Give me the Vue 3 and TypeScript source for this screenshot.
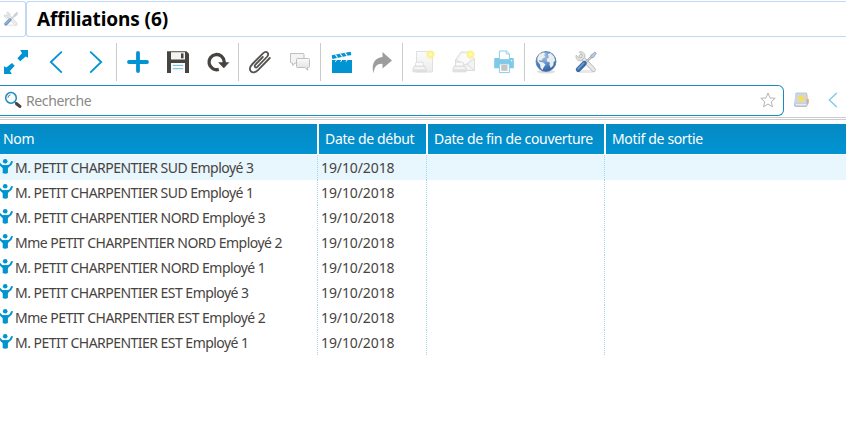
<script setup lang="ts">
interface Affiliation {
  name: string
  start: string
}

const columns: string[] = ['Nom', 'Date de début', 'Date de fin de couverture', 'Motif de sortie']

const rows: Affiliation[] = [
  'M. PETIT CHARPENTIER SUD Employé 3',
  'M. PETIT CHARPENTIER SUD Employé 1',
  'M. PETIT CHARPENTIER NORD Employé 3',
  'Mme PETIT CHARPENTIER NORD Employé 2',
  'M. PETIT CHARPENTIER NORD Employé 1',
  'M. PETIT CHARPENTIER EST Employé 3',
  'Mme PETIT CHARPENTIER EST Employé 2',
  'M. PETIT CHARPENTIER EST Employé 1',
].map((name) => ({ name, start: '19/10/2018' }))

const groups: string[][] = [
  ['switch', 'previous', 'next'],
  ['new', 'save', 'reload'],
  ['attachment', 'note'],
  ['action', 'relate'],
  ['report', 'email', 'print'],
  ['web', 'tools'],
]
</script>

<template>
  <div class="screen">
    <svg class="defs" width="0" height="0">
      <defs>
        <linearGradient id="paper" x1="0" y1="0" x2="0" y2="1">
          <stop offset="0" stop-color="#fafafa" />
          <stop offset="1" stop-color="#dedede" />
        </linearGradient>
        <linearGradient id="sheet" x1="0" y1="0" x2="0" y2="1">
          <stop offset="0" stop-color="#fbfbfb" />
          <stop offset="1" stop-color="#ececec" />
        </linearGradient>
        <radialGradient id="glow">
          <stop offset="0" stop-color="#fffef0" />
          <stop offset="0.3" stop-color="#fdf69a" />
          <stop offset="0.65" stop-color="#fbf07c" stop-opacity="0.85" />
          <stop offset="1" stop-color="#fdf8b0" stop-opacity="0" />
        </radialGradient>
        <radialGradient id="sea" cx="0.4" cy="0.25" r="0.8">
          <stop offset="0" stop-color="#a9c5e8" />
          <stop offset="0.6" stop-color="#4d82c2" />
          <stop offset="1" stop-color="#2b5a9c" />
        </radialGradient>
        <symbol id="tools" viewBox="0 0 24 24">
          <ellipse cx="12" cy="21.5" rx="10" ry="1.6" fill="#e8e8e8" />
          <path d="M7 6.5 19.5 19.5" stroke="#b5b7b5" stroke-width="4.6" stroke-linecap="round" />
          <path d="M7 6.5 19.5 19.5" stroke="#e7e8e7" stroke-width="3.2" stroke-linecap="round" />
          <path d="M5.3 1.9 8.2 4.8 7.8 7.4 5.2 8 2.2 5.2C1.3 8.6 3.7 11.4 7 10.8L10.8 7.3C11.6 3.8 8.7 1 5.3 1.9Z" fill="#e3e4e3" stroke="#b8bab8" stroke-width="0.9" />
          <path d="M11 13 18 6.4" stroke="#a4a8ac" stroke-width="2.4" />
          <path d="M11 13 18 6.4" stroke="#dadddf" stroke-width="1" />
          <path d="M17 5.2 21 2 22.3 3.2 19.5 7.4 17.8 7.8 16.5 6.7Z" fill="#b7c8dd" stroke="#8ba3c2" stroke-width="0.8" />
          <path d="M10.2 13.4 4.3 19.4" stroke="#3a69a8" stroke-width="5" stroke-linecap="round" />
          <path d="M9.7 13.1 4.1 18.7" stroke="#6a96cb" stroke-width="2" stroke-linecap="round" />
        </symbol>
        <symbol id="printer" viewBox="0 0 15 12">
          <path d="M4 1.2H11L12 5.5H3Z" fill="#fafafa" stroke="#dadada" stroke-width="0.8" />
          <path d="M2.5 5H12.5L14 7.5V10.8H1V7.5Z" fill="#ececec" stroke="#d3d3d3" stroke-width="0.8" />
          <path d="M2.5 7H12.5" stroke="#fafafa" stroke-width="1.2" />
          <path d="M2 9.2H13" stroke="#d6d6d6" stroke-width="0.8" />
        </symbol>
      </defs>
    </svg>

    <header class="titlebar">
      <div class="titletool">
        <svg class="mini" width="16" height="16"><use href="#tools" /></svg>
      </div>
      <h1 class="title">Affiliations (6)</h1>
    </header>

    <div class="toolbar">
      <div v-for="(group, g) in groups" :key="g" class="group">
        <button v-for="icon in group" :key="icon" class="tool" type="button" :aria-label="icon">
          <svg width="24" height="24" viewBox="0 0 24 24" fill="none">
            <g v-if="icon === 'switch'">
              <path d="M16.2 0H24V7.8L21.7 6.5 16.2 11.2 13.4 8.3 18 3.2Z" fill="#0094d2" />
              <path d="M0 24V16.2L2.3 17.4 8 12.9 10.7 15.7 6 21 7.8 24Z" fill="#0094d2" />
            </g>
            <path v-else-if="icon === 'previous'" d="M17.8 1.6 6.8 12 17.8 22.6" stroke="#0094d2" stroke-width="1.8" />
            <path v-else-if="icon === 'next'" d="M6.2 1.6 17.2 12 6.2 22.6" stroke="#0094d2" stroke-width="1.8" />
            <path v-else-if="icon === 'new'" d="M12 3V21M3 12H21" stroke="#0094d2" stroke-width="3.8" stroke-linecap="round" />
            <g v-else-if="icon === 'save'">
              <path d="M1 1.2H20.5L23 3.7V23H1Z" fill="#474340" />
              <path d="M5 2.2H19V9.5H5Z" fill="#f3f3f0" />
              <path d="M15 3.4H17.5V8.3H15Z" fill="#474340" />
              <path d="M5 13H19V23H5Z" fill="#fafafa" />
              <path d="M6.8 15.4H17.2M6.8 18.7H17.2" stroke="#6bbde2" stroke-width="1" />
            </g>
            <g v-else-if="icon === 'reload'">
              <path d="M12.8 19.4A7.6 7.6 0 1 1 18.2 11.8V13" stroke="#474340" stroke-width="3.3" />
              <path d="M12.7 12.6H22.8L17.8 18Z" fill="#474340" stroke="#474340" stroke-width="0.6" />
            </g>
            <g v-else-if="icon === 'attachment'" stroke="#55524f" stroke-width="1.8" stroke-linecap="round" stroke-linejoin="round">
              <path d="M14.8 7 7.2 14.8C5.8 16.4 7.7 18.4 9.3 16.9L18.8 7C22 3.5 18.6 -.1 15 3.3L4.4 14C-1.3 20 4.4 25.6 10 20.1L21.8 8" />
            </g>
            <g v-else-if="icon === 'note'" stroke="#b8b8b8" stroke-width="0.9">
              <path d="M2.5 3.5H15Q16 3.5 16 4.5V12Q16 13 15 13H7L4.7 15.7V13H3.5Q2.5 13 2.5 12Z" fill="#f4f4f4" />
              <path d="M9.5 8.5H20.5Q21.5 8.5 21.5 9.5V16.5Q21.5 17.5 20.5 17.5H19.6V20.3L17 17.5H9.5Q8.5 17.5 8.5 16.5V9.5Q8.5 8.5 9.5 8.5Z" fill="url(#paper)" />
            </g>
            <g v-else-if="icon === 'action'">
              <path d="M2 10H22V23H2Z" fill="#0094d2" />
              <path d="M1.7 5.3 20.7 1.8 21.3 5 2.3 9Z" fill="#0094d2" />
              <path d="M5.4 4.6 7.5 7.8M10.2 3.7 12.4 6.8M15.1 2.8 17.3 5.8" stroke="#fff" stroke-width="1.1" />
              <path d="M6.5 10 5.3 11.8M11.8 10 10.6 11.8M17.1 10 15.9 11.8" stroke="#fff" stroke-width="1" />
            </g>
            <path v-else-if="icon === 'relate'" d="M12.5 2 22 10.5 12.5 18.5V13.8C7 13.5 4.6 16.4 3.5 23.3C.8 14 5.2 7.5 12.5 7.1Z" fill="#9e9d9b" />
            <g v-else-if="icon === 'report'">
              <path d="M4.5 1.5H20.5V22H4.5Z" fill="url(#sheet)" stroke="#dcdcdc" stroke-width="0.9" />
              <svg x="0" y="11" width="15" height="12"><use href="#printer" /></svg>
              <circle cx="18.5" cy="4.5" r="5" fill="url(#glow)" />
            </g>
            <g v-else-if="icon === 'email'">
              <path d="M3.5 10 9 2H16L22.5 8.5V20.5H3.5Z" fill="#f3f3f3" stroke="#d6d6d6" stroke-width="0.8" />
              <path d="M6 10 10.3 3.5H17V12L13 14Z" fill="#fafafa" />
              <path d="M3.5 9.6 13.5 15 22.5 8.5M22.5 20.5 15 14" stroke="#d6d6d6" stroke-width="0.8" />
              <svg x="0" y="11" width="15" height="12"><use href="#printer" /></svg>
              <circle cx="18.5" cy="4.5" r="5" fill="url(#glow)" />
            </g>
            <g v-else-if="icon === 'print'">
              <path d="M2.2 9Q2.2 8 3.2 8H20.8Q21.8 8 21.8 9V18.3H2.2Z" fill="#7fc9e8" />
              <path d="M7.4 1H14.6L17.4 3.7V9.6H7.4Z" fill="#fff" stroke="#8bcde9" stroke-width="1" />
              <path d="M14.2 1.2V4H17.2" stroke="#8bcde9" stroke-width="0.9" />
              <path d="M7.4 14H17.4V22.6H7.4Z" fill="#fff" stroke="#8bcde9" stroke-width="1" />
              <path d="M9.2 15H15.5V20.8H9.2Z" fill="#c6c4c2" />
              <circle cx="19.6" cy="10.8" r="0.7" fill="#fff" />
            </g>
            <g v-else-if="icon === 'web'">
              <ellipse cx="12" cy="21.8" rx="9" ry="1.7" fill="#dedede" />
              <circle cx="12" cy="11.5" r="10" fill="url(#sea)" stroke="#5b7ba7" stroke-width="0.8" />
              <path d="M3.3 8.1 5.6 4 9.6 2.4 11.7 3.7 9.7 5.1 11.4 6.6 8.5 8.7 7.4 10.8 5 10.1 5.7 12 8.8 12.2 11.5 14.6 9.6 17.5 8.5 20.1 6.6 17.9 6 14.3 3.6 11.6Z" fill="#eef0ee" />
              <path d="M13.8 4.2 16.6 3.1 20.2 6.7 21.2 11 19.8 11.7 19.3 15.4 16.8 18 15.4 14.8 15.9 12.5 13 11.5 12.7 8.9 14.8 7.3Z" fill="#e8edf0" />
            </g>
            <use v-else href="#tools" />
          </svg>
        </button>
      </div>
    </div>

    <div class="searchrow">
      <div class="searchbox">
        <svg class="lens" width="18" height="18" viewBox="0 0 18 18" fill="none">
          <path d="M11 11.2 12.6 12.7" stroke="#777" stroke-width="1.6" />
          <path d="M12.6 12.7 15.8 15.4" stroke="#474340" stroke-width="3.2" stroke-linecap="round" />
          <circle cx="7" cy="6.9" r="5.3" fill="#fafdff" stroke="#188dbd" stroke-width="1.5" />
          <path d="M3.9 6.8Q4.1 4.2 6.5 3.8" stroke="#777" stroke-width="1" />
        </svg>
        <span class="placeholder">Recherche</span>
        <svg class="star" width="16" height="16" viewBox="0 0 16 16" fill="none">
          <path d="M8 1 10 5.9 15.2 6.3 11.2 9.7 12.5 14.8 8 12 3.5 14.8 4.8 9.7 .8 6.3 6 5.9Z" stroke="#b4b4b4" stroke-width="1" />
        </svg>
      </div>
      <svg class="book" width="16" height="16" viewBox="0 0 16 16" fill="none">
        <path d="M2 1H12.5L14 12 12.5 14.5H1.7Q.5 14.5 .5 13Z" fill="#b4c0d2" stroke="#a8b5c8" stroke-width="0.7" />
        <path d="M2.5 1.3H12.2V11.8H1V3Q1 1.3 2.5 1.3Z" fill="#ccd6e5" />
        <path d="M1.5 12.8H12.5" stroke="#f5f5f5" stroke-width="1.2" />
        <path d="M13 3V7" stroke="#f4d582" stroke-width="1.5" />
        <path d="M14 7V11.3" stroke="#ee9c9c" stroke-width="1.6" />
        <path d="M7 2.4 8.4 5.2 11.3 5.5 9.1 7.5 9.7 10.4 7 9 4.3 10.4 4.9 7.5 2.7 5.5 5.6 5.2Z" fill="#f9e04a" />
      </svg>
      <svg class="back" width="10" height="16" viewBox="0 0 10 16" fill="none">
        <path d="M8.7 1 1.4 8 8.7 15" stroke="#7fc9e8" stroke-width="1.4" />
      </svg>
    </div>
    <div class="rule"></div>

    <div class="grid head">
      <div v-for="column in columns" :key="column" class="th">{{ column }}</div>
    </div>
    <div class="body">
      <div v-for="(row, i) in rows" :key="row.name" class="grid row" :class="{ selected: i === 0 }">
        <div class="td name">
          <svg class="person" width="14" height="16" viewBox="0 0 14 16" fill="none">
            <circle cx="5.2" cy="3.2" r="2.3" fill="#0094d2" />
            <path d="M-2 4 2 8.2H8.4Q11.3 6.6 12.2 3.3" stroke="#0094d2" stroke-width="2" />
            <path d="M1 7.3H9.4L7.9 10.6V15Q5.2 16.4 2.7 15V10.6Z" fill="#0094d2" />
          </svg>
          <span>{{ row.name }}</span>
        </div>
        <div class="td date">{{ row.start }}</div>
        <div class="td"></div>
        <div class="td"></div>
      </div>
    </div>
  </div>
</template>

<style>
body {
  margin: 0;
  background: #fff;
  overflow: hidden;
}
</style>

<style scoped>
.screen {
  width: 846px;
  height: 423px;
  overflow: hidden;
  background: #fff;
  color: #474340;
  font-family: "Noto Sans", sans-serif;
  font-size: 14px;
}

.screen * {
  box-sizing: border-box;
}

svg {
  display: block;
  flex: none;
}

.defs {
  height: 0;
}

.titlebar {
  display: flex;
  height: 37px;
  padding-top: 1px;
}

.titletool,
.title {
  border: 1px solid #c0d7f8;
}

.titletool {
  display: flex;
  align-items: center;
  width: 26px;
  padding-left: 3px;
  border-width: 1px 1px 1px 0;
  border-radius: 0 3px 3px 0;
}

.mini {
  opacity: 0.7;
}

.title {
  flex: 1;
  margin: 0;
  padding-left: 10px;
  border-right: 0;
  border-radius: 3px 0 0 3px;
  color: #000;
  font-size: 19px;
  font-weight: 700;
  letter-spacing: -0.1px;
  line-height: 35px;
}

.toolbar {
  display: flex;
  height: 48px;
  padding: 6px 0 4px;
  margin-left: -4px;
}

.group {
  display: flex;
}

.group + .group {
  border-left: 1px solid #cbcbcb;
  padding-left: 1px;
}

.tool {
  display: flex;
  align-items: center;
  justify-content: center;
  width: 40px;
  height: 38px;
  padding: 0;
  border: 0;
  background: none;
}

.searchrow {
  display: flex;
  align-items: center;
  height: 31px;
}

.searchbox {
  display: flex;
  align-items: center;
  width: 784px;
  height: 31px;
  padding: 0 7px 0 4px;
  border: 1px solid #188dbd;
  border-left: 0;
  border-radius: 0 6px 6px 0;
}

.placeholder {
  flex: 1;
  margin-left: 4px;
  color: #8b8886;
  letter-spacing: -0.38px;
}

.lens,
.star,
.book,
.back {
  margin-bottom: 2px;
}

.book {
  margin-left: 10px;
}

.back {
  margin-left: 18px;
}

.rule {
  height: 3px;
  margin: 1px 0 4px;
  border: solid #cbcbcb;
  border-width: 1px 0;
}

.grid {
  display: grid;
  grid-template-columns: 317px 109px 178px 1fr;
}

.head {
  height: 30px;
  background: linear-gradient(#0689c3, #0094d2);
  color: #fff;
  letter-spacing: -0.34px;
  line-height: 30px;
}

.th {
  padding-left: 6px;
  border-left: 2px solid #fff;
  white-space: nowrap;
}

.th:first-child {
  padding-left: 3px;
  border-left: 0;
}

.body {
  padding-top: 1px;
}

.row {
  height: 25px;
  line-height: 26px;
}

.selected {
  background: #e8f6fe;
}

.td {
  height: 25px;
  padding-left: 3px;
  border-left: 1px dotted #a2d7ee;
  white-space: nowrap;
}

.td.name {
  display: flex;
  padding-left: 0;
  border-left: 0;
  letter-spacing: -0.53px;
}

.td.date {
  letter-spacing: -0.1px;
}

.person {
  margin: 3px 1px 0 0;
}
</style>
